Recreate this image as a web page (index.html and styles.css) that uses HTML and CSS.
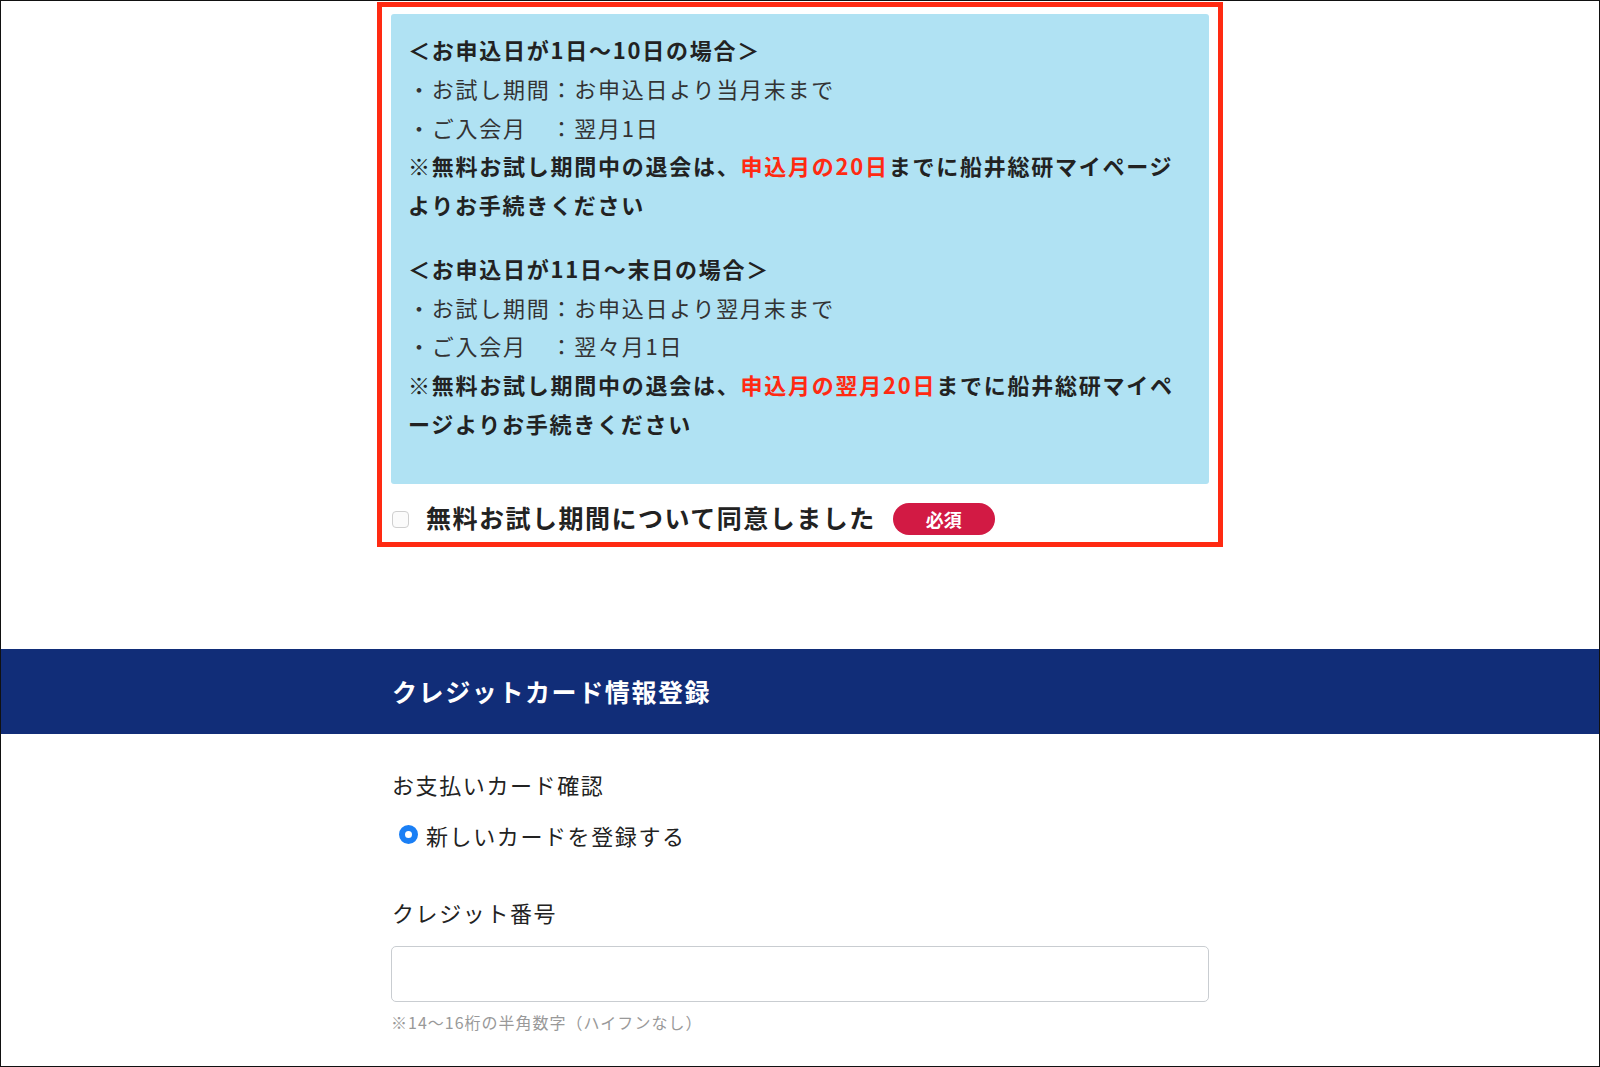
FILE: index.html
```html
<!DOCTYPE html>
<html lang="ja">
<head>
  <meta charset="UTF-8">
  <meta name="viewport" content="width=device-width, initial-scale=1.0">
  <title>クレジットカード情報登録</title>
  <link rel="stylesheet" href="styles.css">
</head>
<body>
  <div class="page">
    <div class="trial">
      <div class="notice">
        <div class="case">
          <p class="case-title">＜お申込日が1日〜10日の場合＞</p>
          <p>・お試し期間：お申込日より当月末まで</p>
          <p>・ご入会月　：翌月1日</p>
          <p class="case-note">※無料お試し期間中の退会は、<span class="red">申込月の20日</span>までに船井総研マイページよりお手続きください</p>
        </div>
        <div class="case">
          <p class="case-title">＜お申込日が11日〜末日の場合＞</p>
          <p>・お試し期間：お申込日より翌月末まで</p>
          <p>・ご入会月　：翌々月1日</p>
          <p class="case-note">※無料お試し期間中の退会は、<span class="red">申込月の翌月20日</span>までに船井総研マイページよりお手続きください</p>
        </div>
      </div>
      <label class="agree">
        <input type="checkbox" class="agree-box">
        <span class="agree-text">無料お試し期間について同意しました</span>
        <span class="badge">必須</span>
      </label>
    </div>

    <div class="section-head">
      <h2>クレジットカード情報登録</h2>
    </div>

    <form class="card-form">
      <p class="field-label">お支払いカード確認</p>
      <label class="radio-row">
        <span class="radio"></span>
        <span>新しいカードを登録する</span>
      </label>
      <p class="field-label number-label">クレジット番号</p>
      <input type="text" class="card-input">
      <p class="hint">※14〜16桁の半角数字（ハイフンなし）</p>
    </form>
  </div>
</body>
</html>
```

FILE: styles.css
```css
* {
  box-sizing: border-box;
}
body {
  margin: 0;
  background: #fff;
  font-family: "Noto Sans CJK JP", "Noto Sans", sans-serif;
  color: #333;
}
p {
  margin: 0;
}
.page {
  width: 1600px;
  height: 1067px;
  border: 1px solid #111;
  overflow: hidden;
}

/* trial period notice */
.trial {
  width: 846px;
  margin: 1px auto 0;
  border: 5px solid #ff2a12;
  padding: 7px 9px 0;
}
.notice {
  background: #b0e2f3;
  border-radius: 3px;
  padding: 16px 22px 41px 17px;
  font-size: 22px;
  line-height: 38.75px;
  letter-spacing: 1.75px;
  color: #333;
}
.case + .case {
  margin-top: 25px;
}
.case-title,
.case-note {
  font-weight: bold;
  color: #222;
}
.red {
  color: #ff2a12;
}
.agree {
  display: flex;
  align-items: center;
  height: 58px;
  padding: 9px 0 0 1px;
}
.agree-box {
  appearance: none;
  width: 17px;
  height: 17px;
  margin: 4px 17px 0 0;
  border: 1px solid #cfcfcf;
  border-radius: 4px;
  background: #fbfbfb;
}
.agree-text {
  font-size: 25px;
  font-weight: bold;
  letter-spacing: 1.5px;
  color: #222;
}
.badge {
  width: 102px;
  height: 32px;
  margin: 4px 0 0 17px;
  border-radius: 16px;
  background: #d21a44;
  color: #fff;
  font-size: 18px;
  font-weight: bold;
  line-height: 32px;
  text-align: center;
}

/* credit card section */
.section-head {
  margin-top: 102px;
  height: 85px;
  background: #112d78;
  display: flex;
  align-items: center;
}
.section-head h2 {
  width: 818px;
  margin: 0 auto;
  padding-left: 1px;
  color: #fff;
  font-size: 25px;
  letter-spacing: 1.6px;
  font-weight: bold;
}
.card-form {
  width: 818px;
  margin: 0 auto;
  padding-top: 34px;
}
.field-label {
  font-size: 22px;
  line-height: 32px;
  letter-spacing: 1.6px;
  color: #222;
  padding-left: 1px;
}
.radio-row {
  display: flex;
  align-items: center;
  margin-top: 19px;
  font-size: 22px;
  line-height: 32px;
  letter-spacing: 1.6px;
  color: #222;
}
.radio {
  width: 19px;
  height: 19px;
  margin: 0 8px 0 8px;
  border: 6px solid #1a7ff5;
  border-radius: 50%;
  background: #fff;
}
.number-label {
  margin-top: 45px;
}
.card-input {
  display: block;
  width: 818px;
  height: 56px;
  margin-top: 18px;
  border: 1px solid #c9cdd1;
  border-radius: 5px;
  background: #fff;
}
.hint {
  margin-top: 9px;
  font-size: 16px;
  line-height: 22px;
  letter-spacing: 1px;
  color: #999;
}
```
